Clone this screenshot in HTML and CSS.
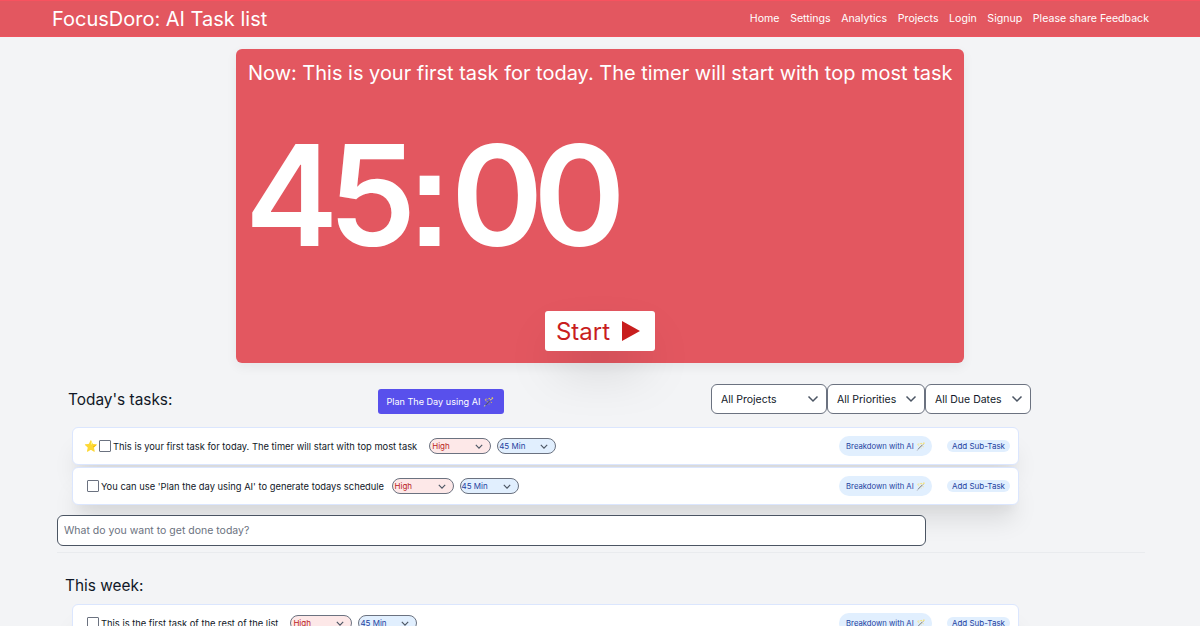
FILE: index.html
```html
<!DOCTYPE html>
<html lang="en">
<head>
  <meta charset="UTF-8">
  <meta name="viewport" content="width=device-width, initial-scale=1.0">
  <title>FocusDoro: AI Task list</title>
  <link rel="stylesheet" href="styles.css">
</head>
<body>
  <nav class="navbar">
    <a class="brand" href="#">FocusDoro: AI Task list</a>
    <div class="nav-links">
      <a href="#">Home</a>
      <a href="#">Settings</a>
      <a href="#">Analytics</a>
      <a href="#">Projects</a>
      <a href="#">Login</a>
      <a href="#">Signup</a>
      <a href="#">Please share Feedback</a>
    </div>
  </nav>

  <section class="timer-card">
    <p class="timer-now">Now: This is your first task for today. The timer will start with top most task</p>
    <div class="timer-time">45<span class="timer-colon">:</span>00</div>
    <button class="start-btn">Start
      <svg width="18" height="20" viewBox="0 0 18 20"><polygon points="0,0 18,10 0,20" fill="#c81e1e"/></svg>
    </button>
  </section>

  <section class="today">
    <div class="list-head">
      <h2 class="list-title">Today's tasks:</h2>
      <button class="plan-btn">Plan The Day using AI 🪄</button>
      <div class="filters">
        <div class="filter filter-projects">All Projects <svg class="chev" width="12" height="8" viewBox="0 0 12 8"><path d="M1.5 1.5 6 6l4.500-4.500" fill="none" stroke="#4b5563" stroke-width="1.500"/></svg></div>
        <div class="filter filter-priorities">All Priorities <svg class="chev" width="12" height="8" viewBox="0 0 12 8"><path d="M1.5 1.5 6 6l4.500-4.500" fill="none" stroke="#4b5563" stroke-width="1.500"/></svg></div>
        <div class="filter filter-dates">All Due Dates <svg class="chev" width="12" height="8" viewBox="0 0 12 8"><path d="M1.5 1.5 6 6l4.500-4.500" fill="none" stroke="#4b5563" stroke-width="1.500"/></svg></div>
      </div>
    </div>

    <ul class="task-list">
      <li class="task">
        <span class="star">⭐</span>
        <span class="check"></span>
        <span class="task-text">This is your first task for today. The timer will start with top most task</span>
        <div class="pill pill-high">High <svg class="chev" width="8" height="5" viewBox="0 0 10 6"><path d="M1 1l4 4 4-4" fill="none" stroke="#4b5563" stroke-width="1.400"/></svg></div>
        <div class="pill pill-time">45 Min <svg class="chev" width="8" height="5" viewBox="0 0 10 6"><path d="M1 1l4 4 4-4" fill="none" stroke="#4b5563" stroke-width="1.400"/></svg></div>
        <button class="ai-btn">Breakdown with AI 🪄</button>
        <button class="sub-btn">Add Sub-Task</button>
      </li>
      <li class="task task-tight">
        <span class="check"></span>
        <span class="task-text">You can use 'Plan the day using AI' to generate todays schedule</span>
        <div class="pill pill-high">High <svg class="chev" width="8" height="5" viewBox="0 0 10 6"><path d="M1 1l4 4 4-4" fill="none" stroke="#4b5563" stroke-width="1.400"/></svg></div>
        <div class="pill pill-time">45 Min <svg class="chev" width="8" height="5" viewBox="0 0 10 6"><path d="M1 1l4 4 4-4" fill="none" stroke="#4b5563" stroke-width="1.400"/></svg></div>
        <button class="ai-btn">Breakdown with AI 🪄</button>
        <button class="sub-btn">Add Sub-Task</button>
      </li>
    </ul>

    <input class="new-task" type="text" placeholder="What do you want to get done today?">
    <hr class="divider">
  </section>

  <section class="week">
    <h2 class="list-title week-title">This week:</h2>
    <ul class="task-list">
      <li class="task">
        <span class="check"></span>
        <span class="task-text">This is the first task of the rest of the list</span>
        <div class="pill pill-high">High <svg class="chev" width="8" height="5" viewBox="0 0 10 6"><path d="M1 1l4 4 4-4" fill="none" stroke="#4b5563" stroke-width="1.400"/></svg></div>
        <div class="pill pill-time">45 Min <svg class="chev" width="8" height="5" viewBox="0 0 10 6"><path d="M1 1l4 4 4-4" fill="none" stroke="#4b5563" stroke-width="1.400"/></svg></div>
        <button class="ai-btn">Breakdown with AI 🪄</button>
        <button class="sub-btn">Add Sub-Task</button>
      </li>
    </ul>
  </section>
</body>
</html>
```

FILE: styles.css
```css
* {
  box-sizing: border-box;
}

html, body {
  height: 626px;
  overflow: hidden;
}

body {
  margin: 0;
  background: #f3f4f6;
  font-family: Inter, sans-serif;
  color: #111827;
}

a {
  color: inherit;
  text-decoration: none;
}

button {
  font-family: inherit;
  border: none;
  cursor: pointer;
}

.navbar {
  display: flex;
  justify-content: space-between;
  align-items: center;
  height: 37px;
  padding: 0 51px 0 52px;
  background: #e35760;
  border-top: 1px solid #f8525f;
  border-bottom: 1px solid #ee5560;
  color: #fff;
}

.brand {
  font-size: 20px;
}

.nav-links {
  display: flex;
  gap: 10.6px;
  font-size: 10.6px;
}

.timer-card {
  display: flex;
  flex-direction: column;
  width: 728px;
  height: 314px;
  margin: 12px auto 0;
  padding: 12px;
  background: #e35760;
  border-radius: 6px;
  color: #fff;
  box-shadow: 0 4px 12px rgba(0, 0, 0, .06);
}

.timer-now {
  margin: 0;
  font-size: 19.98px;
  line-height: 24px;
  white-space: nowrap;
}

.timer-time {
  margin-top: 38px;
  margin-left: -3px;
  font-size: 140px;
  line-height: 144px;
  font-weight: 600;
  letter-spacing: -10px;
  white-space: nowrap;
}

.timer-colon {
  font-family: "Liberation Sans", sans-serif;
  font-weight: 700;
  letter-spacing: -2px;
}

.start-btn {
  display: flex;
  align-items: center;
  gap: 12px;
  align-self: center;
  height: 41px;
  margin-top: 41px;
  padding: 0 15px 0 11px;
  background: #fff;
  border-radius: 3px;
  color: #c81e1e;
  font-size: 24px;
  box-shadow: 0 25px 50px -12px rgba(0, 0, 0, .25);
}

.today {
  padding: 0 55px 0 57px;
}

.list-head {
  display: flex;
  align-items: center;
  height: 30px;
  margin-top: 21px;
  padding-left: 11px;
}

.list-title {
  margin: 0;
  font-size: 15.4px;
  font-weight: 400;
}

.plan-btn {
  height: 25px;
  margin-top: 4px;
  margin-left: 206px;
  padding: 0 10px 0 8px;
  background: #5850ec;
  border-radius: 3px;
  color: #fff;
  font-size: 9.1px;
}

.filters {
  display: flex;
  margin-left: auto;
  margin-right: 114px;
}

.filter {
  display: flex;
  align-items: center;
  justify-content: space-between;
  height: 30px;
  padding: 0 7px 0 9px;
  background: #fff;
  border: 1px solid #6b7280;
  border-radius: 6px;
  font-size: 10.5px;
}

.filter-projects {
  width: 116px;
}

.filter-priorities {
  width: 98px;
}

.filter-dates {
  width: 106px;
}

.task-list {
  margin: 0;
  padding: 0;
  list-style: none;
}

.today .task-list {
  margin: 13px 126px 0 15px;
}

.task {
  display: flex;
  align-items: center;
  height: 38px;
  margin-bottom: 2px;
  padding: 0 8px 0 14px;
  background: #fff;
  border: 1px solid #dbe6fe;
  border-radius: 6px;
  box-shadow: 0 20px 25px -5px rgba(0, 0, 0, .1), 0 10px 10px -5px rgba(0, 0, 0, .04);
  font-size: 9.35px;
}

.star {
  width: 15px;
  margin-left: -3px;
  font-size: 11px;
}

.check {
  flex: none;
  width: 12px;
  height: 12px;
  margin-right: 2px;
  border: 1px solid #6b7280;
  border-radius: 1px;
  background: #fff;
}

.task-text {
  margin-right: 12px;
  white-space: nowrap;
}

.task-tight .task-text {
  margin-right: 7.5px;
}

.pill {
  display: flex;
  align-items: center;
  justify-content: space-between;
  width: 62px;
  height: 16px;
  margin-right: 6px;
  padding: 0 7px 0 2px;
  border: 1px solid #6b7280;
  border-radius: 8px;
  font-size: 8px;
}

.pill-high {
  background: #fde8e8;
  color: #b91c1c;
}

.pill-time {
  width: 59px;
  padding-left: 1px;
  background: #e1effe;
  color: #1e429f;
}

.ai-btn {
  height: 20px;
  margin-left: auto;
  padding: 0 6px 0 7px;
  background: #e1effe;
  border-radius: 10px;
  color: #1e429f;
  font-size: 7.7px;
}

.sub-btn {
  height: 12px;
  margin-left: 15px;
  padding: 0 5px;
  background: #e1effe;
  border-radius: 6px;
  color: #1e429f;
  font-size: 8px;
}

.new-task {
  display: block;
  width: 869px;
  height: 31px;
  margin-top: 10px;
  padding: 0 6px;
  border: 1.5px solid #4b5563;
  border-radius: 6px;
  background: #fff;
  font-family: inherit;
  font-size: 10.5px;
}

.new-task::placeholder {
  color: #6b7280;
}

.divider {
  height: 1px;
  margin: 6px 0 0;
  border: none;
  background: #e9ebee;
}

.week {
  padding: 0 181px 0 65px;
}

.week-title {
  margin-top: 23px;
  line-height: 19px;
}

.week .task-list {
  margin: 9px 0 0 7px;
}
```
